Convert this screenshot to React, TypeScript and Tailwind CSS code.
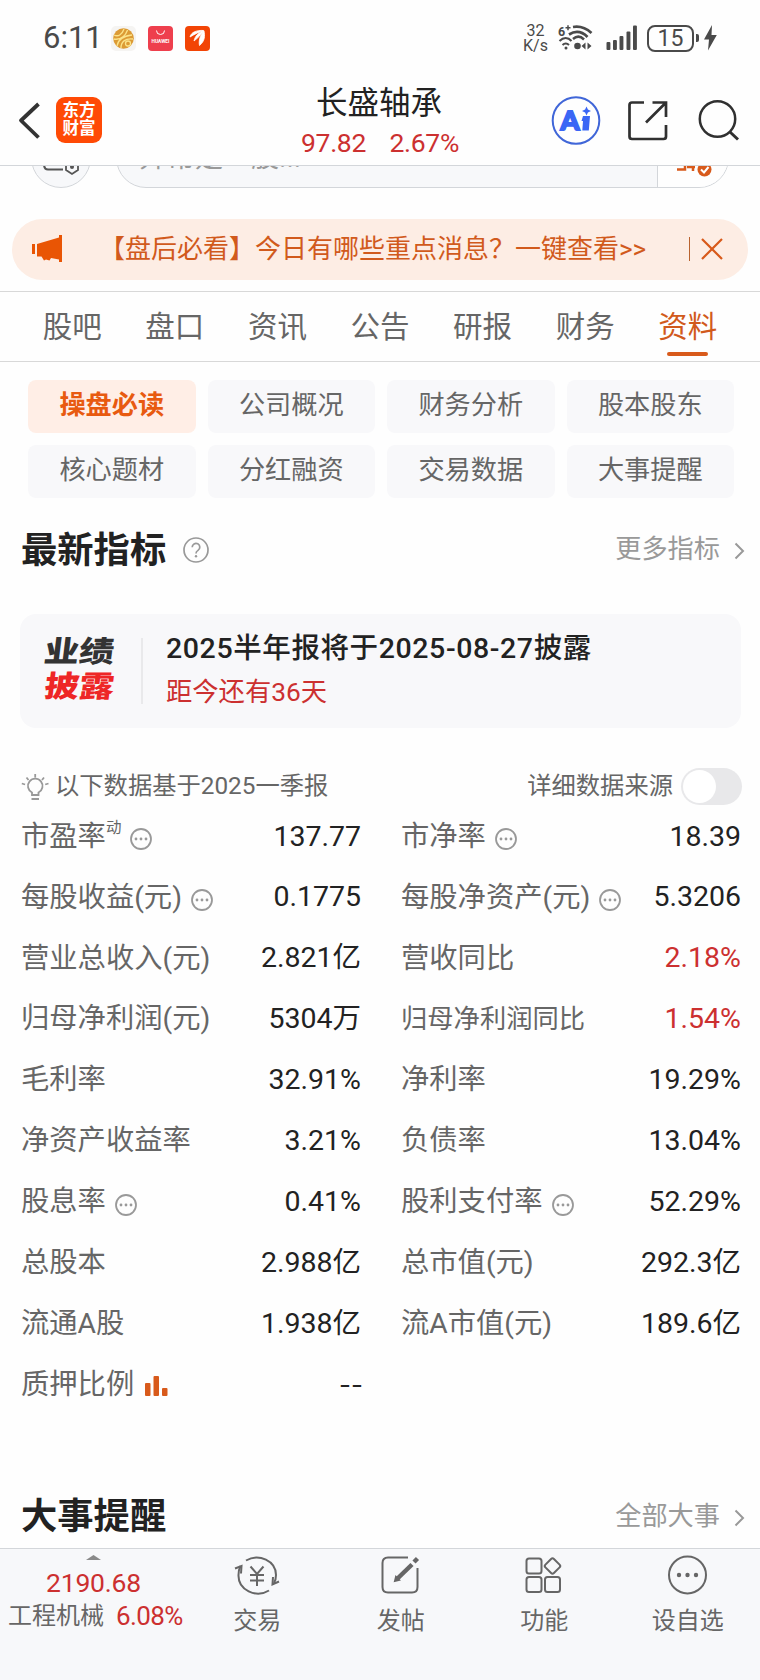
import type { ReactNode } from "react";

type Metric = {
    label: string;
    value: string;
    sup?: string;
    info?: boolean;
    chart?: boolean;
    up?: boolean;
    tight?: boolean;
};

const TABS = ["股吧", "盘口", "资讯", "公告", "研报", "财务", "资料"];

const SECTIONS = ["操盘必读", "公司概况", "财务分析", "股本股东", "核心题材", "分红融资", "交易数据", "大事提醒"];

const METRICS: Metric[] = [
    { label: "市盈率", sup: "动", info: true, value: "137.77" },
    { label: "市净率", info: true, value: "18.39" },
    { label: "每股收益(元)", info: true, value: "0.1775" },
    { label: "每股净资产(元)", info: true, value: "5.3206" },
    { label: "营业总收入(元)", value: "2.821亿" },
    { label: "营收同比", value: "2.18%", up: true },
    { label: "归母净利润(元)", value: "5304万" },
    { label: "归母净利润同比", value: "1.54%", up: true, tight: true },
    { label: "毛利率", value: "32.91%" },
    { label: "净利率", value: "19.29%" },
    { label: "净资产收益率", value: "3.21%" },
    { label: "负债率", value: "13.04%" },
    { label: "股息率", info: true, value: "0.41%" },
    { label: "股利支付率", info: true, value: "52.29%" },
    { label: "总股本", value: "2.988亿" },
    { label: "总市值(元)", value: "292.3亿" },
    { label: "流通A股", value: "1.938亿" },
    { label: "流A市值(元)", value: "189.6亿" },
    { label: "质押比例", chart: true, value: "--" },
];

function StatusBar() {
    return (
        <div className="flex h-[78px] items-center justify-between pl-[43px] pr-[43px] pb-[2px] text-[#4a4a4a]">
            <div className="flex items-center">
                <span className="w-[68px] text-[31px] leading-[30px]">6:11</span>
                <div className="flex gap-[12px]">
                    <svg width="25" height="25" viewBox="0 0 25 25">
                        <rect width="25" height="25" rx="5" fill="#f5f4f2" />
                        <circle cx="12.5" cy="12.5" r="10.3" fill="#dc9b35" />
                        <g fill="none" stroke="#fbe38a" strokeWidth="1.3">
                            <path d="M3 9c4 2 8 0 10-6M2.600 13c6 1 11-1 14-9M6 20c1-6 6-10 15-11M10 22c0-6 4-10 12-9" />
                            <circle cx="17" cy="17.500" r="2.500" />
                        </g>
                    </svg>
                    <svg width="25" height="25" viewBox="0 0 25 25">
                        <rect width="25" height="25" rx="4" fill="#ee3f4d" />
                        <path d="M8.500 4.500a4 4 0 0 0 8 0" fill="none" stroke="#fff" strokeWidth="1" />
                        <text x="12.500" y="16.500" fontSize="4.800" fontWeight="700" fill="#fff" textAnchor="middle">HUAWEI</text>
                    </svg>
                    <svg width="25" height="25" viewBox="0 0 25 25">
                        <rect width="25" height="25" rx="4" fill="#f24405" />
                        <path d="M5 11C6 6 12 4 18.500 4.500 14 6 10 8 5 11zM9 15C10 10 14 6 18.800 4.800 16.500 8 13 12 9 15zM14.500 19.500C13.500 15 15 9 19 5 20 10 20 15 14.500 19.500z" fill="#fff" stroke="#fff" strokeWidth="0.800" />
                    </svg>
                </div>
            </div>
            <div className="flex items-center">
                <div className="mr-[10px] w-[25px] text-center text-[16px] leading-[15.500px]">
                    <div>32</div>
                    <div>K/s</div>
                </div>
                <svg width="36" height="28" viewBox="0 0 36 28" className="mr-[12px]">
                    <text x="0" y="12" fontSize="12.500" fontWeight="700" fill="#4a4a4a">6</text>
                    <path d="M7.500 3.800h5M10 1.300v5" stroke="#4a4a4a" strokeWidth="1.500" />
                    <g fill="none" stroke="#4a4a4a" strokeWidth="2.700">
                        <path d="M15 3c7-1.200 13 1 18.500 6" />
                        <path d="M11 10.500c6.500-4 13-3 18.500 2.500" />
                        <path d="M1.500 17c4-4 8.500-4 12 0M4.500 21c2-2 4.500-2 6.500 0" strokeWidth="2" />
                        <path d="M15 15c4-3.500 7.500-3 11 .5" strokeWidth="2.500" />
                    </g>
                    <circle cx="8" cy="24" r="1.500" fill="#4a4a4a" />
                    <circle cx="19.500" cy="22" r="3.300" fill="#4a4a4a" />
                    <path d="M23.500 22l4-3.500v7zM33.500 22l-4-3.500v7z" fill="#4a4a4a" />
                </svg>
                <svg width="32" height="26" viewBox="0 0 32 26" className="mr-[9px]" fill="#4a4a4a">
                    <rect x="0.500" y="17" width="3.900" height="8" rx="1" />
                    <rect x="7" y="15" width="3.900" height="10" rx="1" />
                    <rect x="13.500" y="11" width="3.900" height="14" rx="1" />
                    <rect x="20.500" y="6.500" width="3.900" height="18.500" rx="1" />
                    <rect x="27" y="0.500" width="3.900" height="24.500" rx="1" />
                </svg>
                <div className="flex h-[27px] w-[47px] items-center justify-center rounded-[8px] border-2 border-[#4a4a4a] text-[23px] leading-[23px]">
                    15
                </div>
                <div className="ml-[2px] h-[8px] w-[3px] rounded-r-[2px] bg-[#4a4a4a]" />
                <svg width="13" height="26" viewBox="0 0 13 26" className="ml-[5px]" fill="#4a4a4a">
                    <path d="M8 0L0 14.500h5L4 25.500 12.800 10H7.500z" />
                </svg>
            </div>
        </div>
    );
}

function Header() {
    return (
        <div className="flex h-[88px] items-start border-b border-[#d3d6da] pl-[18px] pr-[19px] pt-[19px]">
            <svg width="22" height="38" viewBox="0 0 22 38" className="mt-[4px]" fill="none" stroke="#333" strokeWidth="3.800">
                <path d="M20.500 3L3 19.500 20.500 36.500" strokeLinejoin="round" />
            </svg>
            <div className="ml-[16px] flex h-[46px] w-[46px] flex-col items-center justify-center rounded-[9px] bg-[#ff4a05] text-[16.500px] font-bold leading-[18.500px] text-white">
                <span>东方</span>
                <span>财富</span>
            </div>
            <div className="ml-[199px] mt-[-11px] w-[158px]">
                <div className="pl-[15px] text-[31.500px] leading-[36px] text-[#222]">长盛轴承</div>
                <div className="mt-[5px] flex justify-between text-[26.500px] leading-[32px] tracking-[-0.3px] text-[#cc3030]">
                    <span>97.82</span>
                    <span>2.67%</span>
                </div>
            </div>
            <svg width="50" height="50" viewBox="0 0 50 50" className="ml-[92px] mt-[-1px]">
                <circle cx="25" cy="24.500" r="23.300" fill="none" stroke="#4066d8" strokeWidth="2" />
                <text x="9.500" y="34" fontFamily="Lato" fontSize="27" fontWeight="900" fill="#3a66f5" stroke="#3a66f5" strokeWidth="1.800">A</text>
                <path d="M32 20h7l-1.200 14.500h-6.500l.7-9.500h-1.500z" fill="#3a66f5" />
                <path d="M35.500 10.500l1.400 3.100 3.100 1.400-3.100 1.400-1.400 3.100-1.400-3.100L31 15l3.100-1.400z" fill="#3a66f5" />
            </svg>
            <svg width="40" height="40" viewBox="0 0 40 40" className="ml-[27px] mt-[4px]" fill="none" stroke="#303030" strokeWidth="2.700">
                <path d="M16 1.500H4a2.500 2.500 0 0 0-2.500 2.500v31.500A2.500 2.500 0 0 0 4 38h31.500a2.500 2.500 0 0 0 2.500-2.500V24" />
                <path d="M24.500 1.500H38V16M38 1.500L18 21.500" />
            </svg>
            <svg width="42" height="42" viewBox="0 0 42 42" className="ml-[30px] mt-[3px]" fill="none" stroke="#303030" strokeWidth="2.500">
                <circle cx="19.500" cy="19" r="17.700" />
                <path d="M32 32l8 7.500" strokeWidth="3" />
            </svg>
        </div>
    );
}

// search row is scrolled half way under the header, only its lower edge shows
function SearchRow() {
    return (
        <div className="flex h-[22px] items-end overflow-hidden pl-[31px]">
            <div className="flex h-[60px] w-[60px] shrink-0 items-center justify-center rounded-full border border-[#d3d6da] bg-[#f7f8fa]">
                <svg width="36" height="44" viewBox="0 0 36 44" className="shrink-0" fill="none" stroke="#555" strokeWidth="2">
                    <path d="M1 28q0 5.500 4 5.500h15" />
                    <path d="M29 23.500l6 3.500v7l-6 4-6-4v-7z" strokeWidth="1.800" />
                    <circle cx="29" cy="31" r="2" fill="#555" stroke="none" />
                </svg>
            </div>
            <div className="ml-[25px] flex h-[60px] w-[613px] shrink-0 overflow-hidden rounded-full border border-[#d3d6da] bg-[#f7f8fa]">
                <div className="w-[541px] border-r border-[#d3d6da] pl-[22px] pt-[13px] text-[28px] leading-[32px] text-[#999]">异常是一股...</div>
                <div className="flex-1 bg-[#fefefe] pl-[17px]">
                    <svg width="40" height="50" viewBox="0 0 40 50">
                        <path d="M2 40.500h8v-4M12 38h8M18 34v8" stroke="#d85a1b" strokeWidth="2.500" fill="none" />
                        <circle cx="29.500" cy="40.500" r="7" fill="#d85a1b" />
                        <path d="M26 40.500l3 3 4.500-5.500" stroke="#fff" strokeWidth="2" fill="none" />
                    </svg>
                </div>
            </div>
        </div>
    );
}

function Banner() {
    return (
        <div className="mx-[12px] mt-[31px] flex h-[61px] items-center rounded-full bg-[#fdede4] pb-[2px] pl-[20px] text-[26px] text-[#d15a1c]">
            <svg width="30" height="27" viewBox="0 0 30 27" fill="#e95504">
                <path d="M0 9h3v10H0zM5 9L27 2.500V0h3v27h-3v-2.500l-8-1.500-1.500 2.500-3.500-1-2 1-2.500-4H5z" />
            </svg>
            <span className="ml-[37px] whitespace-nowrap leading-[32px]">【盘后必看】今日有哪些重点消息？一键查看&gt;&gt;</span>
            <div className="ml-auto h-[24px] w-px bg-[#b9632f]" />
            <svg width="22" height="22" viewBox="0 0 22 22" className="ml-[11px] mr-[25px]" stroke="#d85a1b" strokeWidth="2.200">
                <path d="M1 1l20 20M21 1L1 21" />
            </svg>
        </div>
    );
}

function Tabs() {
    return (
        <div className="mt-[11px] grid h-[71px] grid-cols-7 border-y border-[#d8d8d8] pl-[21px] pr-[21px]">
            {TABS.map((tab) => {
                const active = tab === "资料";
                return (
                    <div key={tab} className={`flex flex-col items-center pt-[15px] text-[29.500px] leading-[40px] ${active ? "text-[#d15a1c]" : "text-[#666]"}`}>
                        {tab}
                        {active && <div className="mt-[5px] h-[4px] w-[41px] rounded-full bg-[#d85a1b]" />}
                    </div>
                );
            })}
        </div>
    );
}

function SectionTitle({ title, link, children }: { title: string; link: string; children?: ReactNode }) {
    return (
        <div className="flex h-[52px] items-center pl-[21px] pr-[15px]">
            <h2 className="pt-[3px] text-[36.300px] font-bold leading-[52px] text-[#222]">{title}</h2>
            {children}
            <span className="ml-auto text-[26.200px] leading-[40px] text-[#999]">{link}</span>
            <svg width="11" height="18" viewBox="0 0 11 18" className="ml-[14px] mt-[4px]" fill="none" stroke="#999" strokeWidth="2">
                <path d="M1.500 1.500L9 9l-7.500 7.500" />
            </svg>
        </div>
    );
}

function MoreDots() {
    return (
        <svg width="22" height="22" viewBox="0 0 22 22" className="ml-[9px] mt-[5px]" fill="#999">
            <circle cx="11" cy="11" r="10" fill="none" stroke="#999" strokeWidth="1.800" />
            <circle cx="6" cy="11" r="1.400" />
            <circle cx="11" cy="11" r="1.400" />
            <circle cx="16" cy="11" r="1.400" />
        </svg>
    );
}

function MetricRow({ metric }: { metric: Metric }) {
    return (
        <div className="flex items-center justify-between pt-[3px]">
            <div className={`flex items-center whitespace-nowrap text-[#666] ${metric.tight ? "text-[26.300px]" : "text-[28.300px]"}`}>
                {metric.label}
                {metric.sup && <span className="mb-[18px] text-[15.500px] leading-[18px]">{metric.sup}</span>}
                {metric.info && <MoreDots />}
                {metric.chart && (
                    <svg width="23" height="20" viewBox="0 0 23 20" className="ml-[11px] mt-[2px]" fill="#d85a1b">
                        <rect x="0" y="7" width="5.500" height="13" rx="1" />
                        <rect x="8.500" y="0" width="5.500" height="20" rx="1" />
                        <rect x="17" y="12" width="5.500" height="8" rx="1" />
                    </svg>
                )}
            </div>
            {metric.value === "--" ? (
                <div className="mr-[-2px] font-[Inter,sans-serif] text-[26px] text-[#222]">--</div>
            ) : (
                <div className={`text-[28.500px] ${metric.up ? "text-[#cc3030]" : "text-[#222]"}`}>{metric.value}</div>
            )}
        </div>
    );
}

function FooterItem({ label, children }: { label: string; children: ReactNode }) {
    return (
        <div className="flex w-[143.500px] flex-col items-center pt-[6px] text-[24px] leading-[32px] text-[#666]">
            <svg width="46" height="44" viewBox="0 0 46 44" fill="none" stroke="#666" strokeWidth="2">
                {children}
            </svg>
            <span className="mt-[6px]">{label}</span>
        </div>
    );
}

function Footer() {
    return (
        <div className="mt-[6px] flex h-[132px] border-t border-[#d3d6da] bg-[#f7f8fa]">
            <div className="w-[185.500px] shrink-0 pt-[6px]">
                <svg width="15" height="5" viewBox="0 0 15 5" className="ml-[86px]">
                    <path d="M0 5L7.500 0 15 5z" fill="#8a8a8a" />
                </svg>
                <div className="mt-[8px] pl-[46px] text-[26.500px] leading-[30px] tracking-[-0.2px] text-[#cc3030]">2190.68</div>
                <div className="mt-[2px] flex whitespace-nowrap pl-[8px] text-[24px] leading-[32px] text-[#666]">
                    工程机械
                    <span className="ml-[12px] text-[26px] tracking-[-0.600px] text-[#cc3030]">6.08%</span>
                </div>
            </div>
            <FooterItem label="交易">
                <path d="M12 5.500C25-2 42 6 42 20c0 3-.5 5.500-2 8M35 35.500C22 43.500 4 35 4.500 20c0-3 .5-6 2-9" />
                <path d="M1 13.500l6.500-2.500-.5 7.500M45 26.500L38.500 29.500l.5-7.500" />
                <path d="M16.500 11.500l6.500 7.500 6.500-7.500M23 19V31M16 20h14M16 25.500h14" />
            </FooterItem>
            <FooterItem label="发帖">
                <path d="M30 2.500H10Q4.500 2.500 4.500 8v24q0 5.500 5.500 5.500h24q5.500 0 5.500-5.500V13" />
                <path d="M19.500 23.500L34 9.500" strokeWidth="4.500" />
                <path d="M17 26l1-4 3 3z" fill="#666" />
                <path d="M36 7L39.500 3.500" strokeWidth="4.500" />
            </FooterItem>
            <FooterItem label="功能">
                <rect x="5.500" y="3.500" width="15" height="15" rx="2.500" />
                <rect x="5.500" y="22" width="15" height="15" rx="2.500" />
                <rect x="24" y="22" width="15" height="15" rx="2.500" />
                <rect x="25.500" y="5" width="12" height="12" rx="2" transform="rotate(45 31.5 11)" />
            </FooterItem>
            <FooterItem label="设自选">
                <circle cx="22.500" cy="20" r="18.500" />
                <g fill="#666" stroke="none">
                    <circle cx="14" cy="20" r="2.200" />
                    <circle cx="22.500" cy="20" r="2.200" />
                    <circle cx="31" cy="20" r="2.200" />
                </g>
            </FooterItem>
        </div>
    );
}

export default function App() {
    return (
        <div className="h-[1680px] w-[760px] overflow-hidden bg-[#fefefe] font-[Roboto,'Noto_Sans_CJK_SC',sans-serif]">
            <StatusBar />
            <Header />
            <SearchRow />
            <Banner />
            <Tabs />

            <div className="mt-[18px] mb-[25px] grid grid-cols-4 gap-[12px] pl-[28px] pr-[26px]">
                {SECTIONS.map((name, i) => (
                    <div
                        key={name}
                        className={`h-[53px] rounded-[8px] text-center text-[26.200px] leading-[51px] ${i === 0 ? "bg-[#ffeee6] font-bold text-[#e85a10]" : "bg-[#f8f8fa] text-[#666]"}`}
                    >
                        {name}
                    </div>
                ))}
            </div>

            <SectionTitle title="最新指标" link="更多指标">
                <svg width="26" height="26" viewBox="0 0 26 26" className="ml-[17px] mt-[2px]" fill="none" stroke="#999" strokeWidth="1.700">
                    <circle cx="13" cy="13" r="12" />
                    <path d="M9.200 10.200a3.800 3.800 0 1 1 5.800 3.200c-1.400.9-2 1.500-2 3" />
                    <circle cx="13" cy="19.300" r="1.200" fill="#999" stroke="none" />
                </svg>
            </SectionTitle>

            <div className="ml-[20px] mr-[19px] mt-[39px] flex h-[114px] items-center rounded-[16px] bg-[#f8f8fa]">
                <div className="ml-[26px] w-[72px] text-[35px] font-black">
                    <div className="h-[35px] origin-top -skew-x-6 scale-y-[0.850] leading-[35px] text-[#333]">业绩</div>
                    <div className="h-[33px] origin-top -skew-x-6 scale-y-[0.850] leading-[35px] text-[#ee2626]">披露</div>
                </div>
                <div className="ml-[23px] h-[66px] w-[2px] bg-[#e9e9eb]" />
                <div className="ml-[23px] pb-[2px]">
                    <div className="whitespace-nowrap text-[28.500px] font-medium leading-[44px] tracking-[0.600px] text-[#222]">2025半年报将于2025-08-27披露</div>
                    <div className="text-[26.300px] leading-[42px] text-[#cc3030]">距今还有36天</div>
                </div>
            </div>

            <div className="mt-[40px] flex h-[37px] items-center pl-[21px] pr-[18px] text-[24.300px] text-[#666]">
                <svg width="28" height="28" viewBox="0 0 28 28" fill="none" stroke="#999" strokeWidth="1.800">
                    <path d="M11 22v-2.500a7.300 7.300 0 1 1 6.500 0V22zM10.500 26h7.500M14.200 1v3.500M5.500 4.500l2 2.500M23 4.500l-2 2.500M.8 10.500l3.300 1M27.500 10.500l-3.300 1" />
                </svg>
                <span className="ml-[6px]">以下数据基于2025一季报</span>
                <span className="ml-auto">详细数据来源</span>
                <div className="ml-[8px] h-[37px] w-[61px] rounded-full bg-[#e8e8ea] p-[2px]">
                    <div className="h-[33px] w-[33px] rounded-full bg-white" />
                </div>
            </div>

            <div className="mb-[76px] grid auto-rows-[60.900px] grid-cols-2 gap-x-[40px] pl-[21px] pr-[19px]">
                {METRICS.map((metric) => (
                    <MetricRow key={metric.label} metric={metric} />
                ))}
            </div>

            <SectionTitle title="大事提醒" link="全部大事" />
            <Footer />
        </div>
    );
}
